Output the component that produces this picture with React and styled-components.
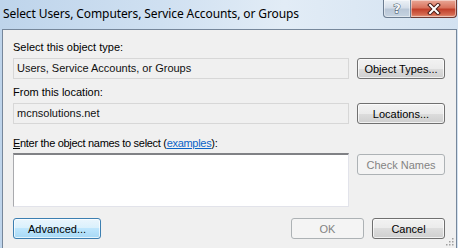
import React from 'react'
import styled, { createGlobalStyle } from 'styled-components'

const GlobalStyle = createGlobalStyle`
  html, body {
    margin: 0;
    padding: 0;
    width: 458px;
    height: 248px;
    overflow: hidden;
    background: #dbe7f3;
  }
`

const Window = styled.div`
  width: 458px;
  height: 248px;
  display: flex;
  flex-direction: column;
  background: linear-gradient(to right, #bed4eb 0%, #cfe0f1 35%, #e2ecf6 62%, #d3e2f1 100%);
  overflow: hidden;
`

const TitleBar = styled.div`
  height: 29px;
  display: flex;
  align-items: flex-start;
  justify-content: space-between;
  box-sizing: border-box;
`

const Title = styled.div`
  font-family: 'Noto Sans', 'Open Sans', sans-serif;
  font-size: 12px;
  letter-spacing: -0.1px;
  color: #000;
  padding: 6px 0 0 3px;
  line-height: 16px;
`

const Caption = styled.div`
  display: flex;
  margin-right: 1px;
`

const CapButton = styled.div`
  height: 18px;
  box-sizing: border-box;
  display: flex;
  align-items: center;
  justify-content: center;
  border: 1px solid ${p => (p.close ? '#6e3a33' : '#6c7d91')};
  border-top: none;
  width: ${p => (p.close ? '46px' : '28px')};
  border-radius: ${p => (p.close ? '0 0 4px 0' : '0 0 0 4px')};
  border-left: ${p => (p.close ? 'none' : '1px solid #6c7d91')};
  background: ${p =>
    p.close
      ? 'linear-gradient(to bottom, #e9a897 0%, #d9735d 45%, #c1402a 55%, #d4684f 85%, #e59a7f 100%)'
      : 'linear-gradient(to bottom, #edf2f7 0%, #d5dee9 45%, #b9c7d7 55%, #c6d3e1 100%)'};
  box-shadow: inset 0 0 0 1px rgba(255, 255, 255, 0.45);
`

const Help = styled.span`
  font-family: 'DejaVu Sans', sans-serif;
  font-weight: bold;
  font-size: 13px;
  line-height: 13px;
  color: #f4f7fa;
  -webkit-text-stroke: 1px #3d4e62;
  paint-order: stroke fill;
`

const Client = styled.div`
  flex: 1;
  margin: 0 1px 0 2px;
  background: #f0f0f0;
  border: 1px solid #76879b;
  border-bottom: none;
  padding: 11px 0 0 10px;
  display: flex;
  flex-direction: column;
  position: relative;
  font-family: 'Liberation Sans', Arial, sans-serif;
  font-size: 11px;
  color: #000;
`

const Label = styled.div`
  height: 13px;
  line-height: 13px;
  margin-top: ${p => p.top || 0}px;
  letter-spacing: ${p => (p.tight ? '-0.3px' : 'normal')};
`

const Row = styled.div`
  display: flex;
  align-items: flex-start;
  gap: 8px;
  margin-top: ${p => p.top || 0}px;
`

const Field = styled.div`
  width: 336px;
  height: 21px;
  box-sizing: border-box;
  border: 1px solid #d7d7d7;
  background: #f0f0f0;
  padding-left: 3px;
  line-height: 19px;
  color: #111;
`

const TextArea = styled.div`
  width: 336px;
  height: 54px;
  box-sizing: border-box;
  background: #fff;
  border: 1px solid #e2e3ea;
  border-top-color: #808185;
  border-left-color: #a9aaae;
  border-top-width: 2px;
`

const Button = styled.div`
  width: ${p => p.w || 88}px;
  height: 21px;
  box-sizing: border-box;
  border-radius: 3px;
  display: flex;
  align-items: center;
  justify-content: center;
  margin-top: ${p => p.top || 0}px;
  border: 1px solid ${p => (p.disabled ? '#adb2b5' : p.hot ? '#3c7fb1' : '#707070')};
  color: ${p => (p.disabled ? '#838383' : '#000')};
  background: ${p =>
    p.disabled
      ? '#f4f4f4'
      : p.hot
      ? 'linear-gradient(to bottom, #eaf6fd 0%, #d9f0fc 50%, #bee6fd 50%, #a7d9f5 100%)'
      : 'linear-gradient(to bottom, #f2f2f2 0%, #ebebeb 50%, #dddddd 50%, #cfcfcf 100%)'};
  box-shadow: ${p => (p.disabled ? 'none' : 'inset 0 0 0 1px rgba(255,255,255,0.7)')};
`

const Link = styled.span`
  color: #0a64c8;
  text-decoration: underline;
`

const Under = styled.span`
  text-decoration: underline;
`

const Footer = styled.div`
  display: flex;
  margin-top: 11px;
  padding-right: 11px;
  gap: 8px;
`

const Spacer = styled.div`
  flex: 1;
`

const Grip = styled.svg`
  position: absolute;
  right: 2px;
  bottom: 2px;
`

export default function App () {
  return (
    <>
      <GlobalStyle />
      <Window>
        <TitleBar>
          <Title>Select Users, Computers, Service Accounts, or Groups</Title>
          <Caption>
            <CapButton>
              <Help>?</Help>
            </CapButton>
            <CapButton close>
              <svg width='14' height='12' viewBox='0 0 14 12'>
                <path d='M3 2 L11 10 M11 2 L3 10' stroke='#4a1d17' strokeWidth='4' strokeLinecap='square' />
                <path d='M3 2 L11 10 M11 2 L3 10' stroke='#ffffff' strokeWidth='2' strokeLinecap='square' />
              </svg>
            </CapButton>
          </Caption>
        </TitleBar>
        <Client>
          <Label>Select this object type:</Label>
          <Row top={4}>
            <Field>Users, Service Accounts, or Groups</Field>
            <Button>Object Types...</Button>
          </Row>
          <Label top={7}>From this location:</Label>
          <Row top={4}>
            <Field>mcnsolutions.net</Field>
            <Button>Locations...</Button>
          </Row>
          <Label top={13} tight>
            <Under>E</Under>nter the object names to select (<Link>examples</Link>):
          </Label>
          <Row top={3}>
            <TextArea />
            <Button disabled top={1}>Check Names</Button>
          </Row>
          <Footer>
            <Button hot w={88}>Advanced...</Button>
            <Spacer />
            <Button disabled w={73}>OK</Button>
            <Button w={73}>Cancel</Button>
          </Footer>
          <Grip width='10' height='10' viewBox='0 0 10 10'>
            {[[8, 2], [8, 5], [5, 5], [8, 8], [5, 8], [2, 8]].map(([x, y]) => (
              <rect key={x + '-' + y} x={x} y={y} width='1.5' height='1.5' fill='#a0a0a0' />
            ))}
          </Grip>
        </Client>
      </Window>
    </>
  )
}
